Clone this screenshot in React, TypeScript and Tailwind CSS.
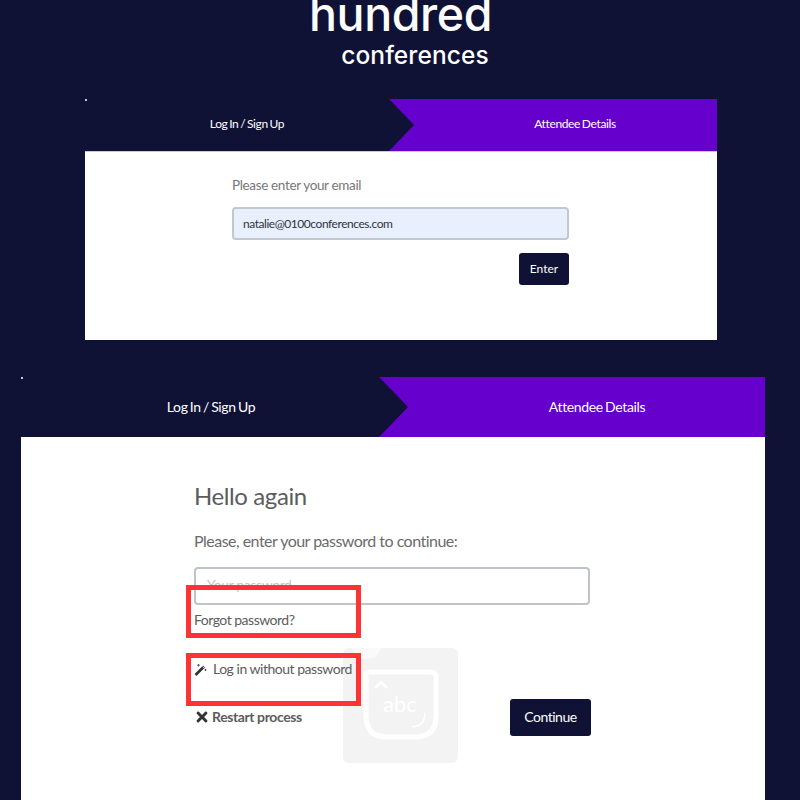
import { FaTimes } from "react-icons/fa";

const lato = "font-['Lato','Liberation_Sans',sans-serif]";

function Tabs({ big }: { big?: boolean }) {
  return (
    <div className={`relative flex tracking-[-0.35px] [word-spacing:-1px] text-white ${big ? "h-[60px] text-[14px]" : "h-[52px] text-[12px]"}`}>
      <span className="absolute left-0 top-0 h-[2px] w-[2px] bg-[#c9c9d6]" />
      <div className={`flex items-center justify-center pb-[2px] ${big ? "w-[358px] pl-[22px]" : "w-[304px] pl-5"}`}>
        Log In / Sign Up
      </div>
      {big ? (
        <div className="flex flex-1 items-center justify-center bg-[#6600cc] pb-[2px] pl-[50px] [clip-path:polygon(0_0,100%_0,100%_100%,0_100%,29px_50%)]">
          Attendee Details
        </div>
      ) : (
        <div className="flex flex-1 items-center justify-center bg-[#6600cc] pb-[2px] pl-[44px] [clip-path:polygon(0_0,100%_0,100%_100%,0_100%,25px_50%)]">
          Attendee Details
        </div>
      )}
    </div>
  );
}

function WandIcon() {
  return (
    <svg viewBox="0 0 13 13" className="h-[13px] w-[13px]" fill="none" stroke="#333">
      <path d="M1.5 12 L10 3.5" strokeWidth="2.6" />
      <path d="M8.3 3.2 L10.3 5.2" stroke="#fff" strokeWidth="0.8" />
      <path d="M4.5 1 V3.5 M3.2 2.2 H5.8 M11.5 6 V8 M10.5 7 H12.5" strokeWidth="0.8" />
    </svg>
  );
}

function KeyboardWatermark() {
  return (
    <div className="absolute left-[322px] top-[211px] h-[115px] w-[115px] overflow-hidden rounded-md bg-[#f3f3f3]">
      <span className="absolute left-2 top-[-20px] h-[31px] w-[31px] rounded-full bg-[#fafafa]" />
      <svg viewBox="0 0 115 115" className="h-full w-full" fill="none" stroke="#fff">
        <path d="M26 24 H88 Q93 24 93 29 V68 Q93 89 72 89 H44 Q23 89 23 68 V27 Q23 24 26 24 Z" strokeWidth="5" />
        <path d="M32 40 L38 34 L44 40" strokeWidth="2.5" />
        <path d="M82 65 Q82 78 69 79" strokeWidth="1.5" />
        <text x="40" y="64" fill="#fff" stroke="none" fontSize="22">abc</text>
      </svg>
    </div>
  );
}

export default function App() {
  return (
    <div className={`h-[800px] overflow-hidden bg-[#0f1235] ${lato}`}>
      {/* logo, top of it is cropped in the picture */}
      <div className="flex h-[99px] flex-col items-center font-['Inter',sans-serif] font-medium text-white">
        <div className="ml-[1px] mt-[-16px] text-[46.5px] leading-[60px] tracking-[-0.4px]">hundred</div>
        <div className="ml-[30px] mt-[-4px] text-[24.5px] leading-[30px] tracking-[0.1px]">conferences</div>
      </div>

      <div className="ml-[85px] w-[632px]">
        <Tabs />
        <div className="h-[189px] border-t border-[#c9c9d6] bg-white pl-[147px] pt-[24px]">
          <p className="text-[13.5px] leading-[18px] tracking-[-0.35px] text-[#777]">Please enter your email</p>
          <div className="mt-[13px] flex h-[33px] w-[337px] items-center rounded border-2 border-[#c3c8cf] bg-[#e8f0fe] pl-[9px] text-[12px] tracking-[-0.45px] text-[#2f3440]">
            natalie@0100conferences.com
          </div>
          <div className="mt-[13px] flex w-[337px] justify-end">
            <button className="h-[32px] w-[50px] rounded-[3px] bg-[#0f1235] text-[12px] text-white">Enter</button>
          </div>
        </div>
      </div>

      <div className="ml-[21px] mt-[37px] w-[744px]">
        <Tabs big />
        <div className="relative h-[363px] bg-white pl-[173px] pt-[44px] text-[#5c5c5c]">
          <KeyboardWatermark />
          <div className="relative">
            <h2 className="text-[24px] leading-[30px] tracking-[-0.4px]">Hello again</h2>
            <p className="mt-[20px] text-[16px] leading-[20px] tracking-[-0.52px] text-[#6b6b6b]">Please, enter your password to continue:</p>
            <div className="mt-[16px] flex h-[38px] w-[396px] items-center rounded border-2 border-[#c0c4c8] pb-[3px] pl-[11px] text-[14px] tracking-[-0.4px] text-[#c4c4c4]">
              Your password
            </div>
            <p className="mt-[6px] text-[14px] leading-[18px] tracking-[-0.5px]">Forgot password?</p>
            <div className="mt-[31px] flex items-center gap-[6px] text-[14px] leading-[18px] tracking-[-0.48px]">
              <WandIcon />
              <span>Log in without password</span>
            </div>
            <div className="flex w-[397px] items-start justify-between">
              <div className="mt-[30px] flex items-center gap-[2px] text-[14px] font-bold leading-[18px] tracking-[-0.4px]">
                <FaTimes className="h-4 w-4 text-[#333]" />
                <span>Restart process</span>
              </div>
              <button className="mt-[21px] h-[37px] w-[81px] rounded-[3px] bg-[#0f1235] pb-[2px] text-[14px] tracking-[-0.5px] text-white">Continue</button>
            </div>
          </div>

          {/* red annotation boxes over the form */}
          <div className="absolute left-[165px] top-[148px] h-[53px] w-[175px] border-[5px] border-[#ff3333]" />
          <div className="absolute left-[165px] top-[216px] h-[53px] w-[175px] border-[5px] border-[#ff3333]" />
        </div>
      </div>
    </div>
  );
}
